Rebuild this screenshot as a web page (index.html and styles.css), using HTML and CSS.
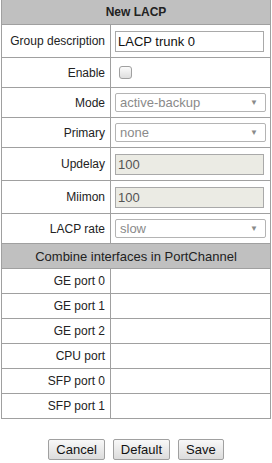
FILE: index.html
```html
<!DOCTYPE html>
<html lang="en">
<head>
    <meta charset="UTF-8">
    <meta name="viewport" content="width=device-width, initial-scale=1.0">
    <title>New LACP</title>

    <!-- style -->
    <link rel="stylesheet" href="styles.css">

</head>
<body>
    <div class="page">
      <table class="form-table">
        <tr class="head-row">
            <th colspan="2">New LACP</th>
        </tr>
        <tr class="row-text">
            <td class="label">Group description</td>
            <td class="value"><input class="text-input" type="text" value="LACP trunk 0"></td>
        </tr>
        <tr class="row-select">
            <td class="label">Enable</td>
            <td class="value"><input class="check" type="checkbox"></td>
        </tr>
        <tr class="row-select">
            <td class="label">Mode</td>
            <td class="value"><div class="select">active-backup<span class="arrow">&#9660;</span></div></td>
        </tr>
        <tr class="row-select">
            <td class="label">Primary</td>
            <td class="value"><div class="select">none<span class="arrow">&#9660;</span></div></td>
        </tr>
        <tr class="row-text">
            <td class="label">Updelay</td>
            <td class="value"><input class="text-input" type="text" value="100" disabled></td>
        </tr>
        <tr class="row-text">
            <td class="label">Miimon</td>
            <td class="value"><input class="text-input" type="text" value="100" disabled></td>
        </tr>
        <tr class="row-select">
            <td class="label">LACP rate</td>
            <td class="value"><div class="select">slow<span class="arrow">&#9660;</span></div></td>
        </tr>
        <tr class="head-row">
            <th colspan="2" class="sub">Combine interfaces in PortChannel</th>
        </tr>
        <tr class="row-port"><td class="label">GE port 0</td><td class="value"></td></tr>
        <tr class="row-port"><td class="label">GE port 1</td><td class="value"></td></tr>
        <tr class="row-port"><td class="label">GE port 2</td><td class="value"></td></tr>
        <tr class="row-port"><td class="label">CPU port</td><td class="value"></td></tr>
        <tr class="row-port"><td class="label">SFP port 0</td><td class="value"></td></tr>
        <tr class="row-port"><td class="label">SFP port 1</td><td class="value"></td></tr>
      </table>

      <div class="controls">
            <button>Cancel</button>
            <button>Default</button>
            <button>Save</button>
      </div>
    </div>
</body>
</html>
```

FILE: styles.css
```css
body {
    margin: 0;
    font-family: "Liberation Sans", Arial, sans-serif;
    color: #222222;
    background-color: #ffffff;
}

.page {
    padding: 0 1px;
}

.form-table {
    width: 270px;
    border-collapse: collapse;
    font-size: 12px;
}

.form-table th,
.form-table td {
    border: 1px solid #a0a0a0;
    padding: 0;
}

.form-table th {
    background-color: #c0c0c0;
    font-weight: bold;
    font-size: 12px;
    height: 24px;
}

.form-table th.sub {
    font-weight: normal;
    font-size: 13px;
}

.head-row:first-child th {
    border-top: none;
}

.label {
    width: 103px;
    text-align: right;
    padding: 0 5px !important;
    white-space: nowrap;
}

.value {
    padding: 0 4px !important;
}

.row-text td {
    height: 32px;
}

.row-select td {
    height: 29px;
}

.row-port td {
    height: 24px;
}

.text-input {
    display: block;
    box-sizing: border-box;
    width: 149px;
    height: 21px;
    margin: 0;
    padding: 0 2px;
    border: 1px solid #a9a9a9;
    font-family: "Liberation Sans", Arial, sans-serif;
    font-size: 13px;
    color: #111111;
}

.text-input:disabled {
    background-color: #ebebe4;
    color: #545454;
}

.check {
    appearance: none;
    display: block;
    width: 13px;
    height: 13px;
    margin: 0 0 0 4px;
    border: 1px solid #a0a0a0;
    border-radius: 3px;
    background: linear-gradient(#fbfbfb, #dedede);
}

.select {
    position: relative;
    box-sizing: border-box;
    width: 151px;
    height: 19px;
    line-height: 17px;
    padding: 0 4px;
    border: 1px solid #b4b4b4;
    border-radius: 2px;
    font-size: 13px;
    color: #8a8a8a;
}

.arrow {
    position: absolute;
    right: 7px;
    top: 0;
    font-size: 8px;
    color: #8a8a8a;
}

.controls {
    display: flex;
    justify-content: center;
    gap: 8px;
    margin-top: 20px;
}

button {
    height: 21px;
    padding: 0 7px;
    font-family: "Liberation Sans", Arial, sans-serif;
    font-size: 13px;
    color: #111111;
    border: 1px solid #a0a0a0;
    border-radius: 2px;
    background: linear-gradient(#f8f8f8, #dcdcdc);
    cursor: pointer;
}
```
